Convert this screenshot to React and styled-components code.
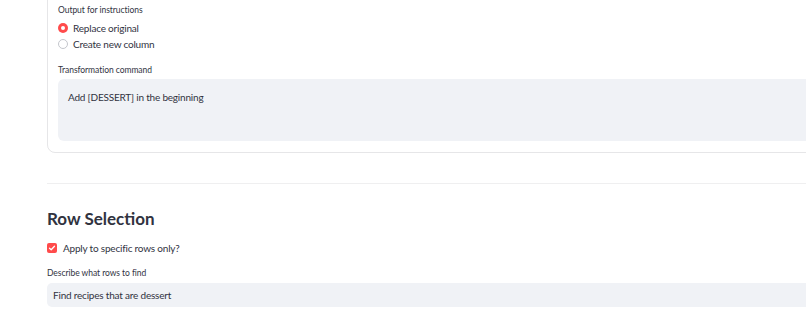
import styled, { createGlobalStyle } from "styled-components";

const GlobalStyle = createGlobalStyle`
  html, body {
    margin: 0;
    padding: 0;
    background: #ffffff;
    overflow: hidden;
  }
  body {
    font-family: Lato, "Liberation Sans", sans-serif;
    color: #31333f;
  }
`;

const Page = styled.div`
  width: 806px;
  height: 332px;
  padding-left: 47px;
  box-sizing: border-box;
  overflow: hidden;
`;

const Card = styled.div`
  margin-top: -16px;
  margin-right: -20px;
  padding: 19px 0 11px 10px;
  border: 1px solid rgba(49, 51, 63, 0.12);
  border-radius: 8px;
  display: flex;
  flex-direction: column;
`;

const Label = styled.div`
  font-size: 8.5px;
  line-height: 12px;
  letter-spacing: -0.05px;
  color: #31333f;
  margin-bottom: ${(p) => p.gap || 4}px;
`;

const RadioGroup = styled.div`
  display: flex;
  flex-direction: column;
  margin-bottom: 12px;
`;

const Option = styled.div`
  display: flex;
  align-items: center;
  gap: 5px;
  height: 16px;
  font-size: 10px;
  letter-spacing: -0.2px;
`;

const RadioDot = styled.span`
  width: 10px;
  height: 10px;
  box-sizing: border-box;
  border-radius: 50%;
  background: ${(p) => (p.checked ? "#ff4b4b" : "#ffffff")};
  border: ${(p) => (p.checked ? "none" : "1px solid #c4c6cc")};
  display: flex;
  align-items: center;
  justify-content: center;
  &::after {
    content: "";
    display: ${(p) => (p.checked ? "block" : "none")};
    width: 4px;
    height: 4px;
    border-radius: 50%;
    background: #ffffff;
  }
`;

const TextArea = styled.div`
  height: 62px;
  box-sizing: border-box;
  background: #f0f2f6;
  border-radius: 6px 0 0 6px;
  padding: 10px 10px;
  font-size: 10px;
  letter-spacing: -0.2px;
  line-height: 16px;
`;

const Divider = styled.hr`
  border: none;
  border-top: 1px solid rgba(49, 51, 63, 0.08);
  margin: 30px -20px 0 0;
`;

const Heading = styled.h2`
  margin: 24px 0 0;
  font-size: 17px;
  line-height: 22px;
  font-weight: 700;
  color: #31333f;
`;

const CheckRow = styled.div`
  display: flex;
  align-items: center;
  gap: 6px;
  height: 16px;
  margin-top: 10px;
  font-size: 10px;
  letter-spacing: -0.2px;
`;

const CheckBox = styled.span`
  width: 10px;
  height: 10px;
  border-radius: 2px;
  background: #ff4b4b;
  display: flex;
  align-items: center;
  justify-content: center;
`;

const Field = styled.div`
  margin-top: 11px;
`;

const Input = styled.div`
  height: 24px;
  box-sizing: border-box;
  background: #f0f2f6;
  border-radius: 5px 0 0 5px;
  padding: 0 6px;
  display: flex;
  align-items: center;
  font-size: 10px;
  letter-spacing: -0.2px;
`;

const App = () => {
  return (
    <>
      <GlobalStyle />
      <Page>
        <Card>
          <Label gap={4}>Output for instructions</Label>
          <RadioGroup>
            <Option>
              <RadioDot checked />
              Replace original
            </Option>
            <Option>
              <RadioDot />
              Create new column
            </Option>
          </RadioGroup>
          <Label gap={3}>Transformation command</Label>
          <TextArea>Add [DESSERT] in the beginning</TextArea>
        </Card>
        <Divider />
        <Heading>Row Selection</Heading>
        <CheckRow>
          <CheckBox>
            <svg width="8" height="8" viewBox="0 0 8 8">
              <path d="M1.5 4.2 L3.2 5.8 L6.5 2.3" fill="none" stroke="#fff" strokeWidth="1.3" strokeLinecap="round" strokeLinejoin="round" />
            </svg>
          </CheckBox>
          Apply to specific rows only?
        </CheckRow>
        <Field>
          <Label gap={4}>Describe what rows to find</Label>
          <Input>Find recipes that are dessert</Input>
        </Field>
      </Page>
    </>
  );
};

export default App;
